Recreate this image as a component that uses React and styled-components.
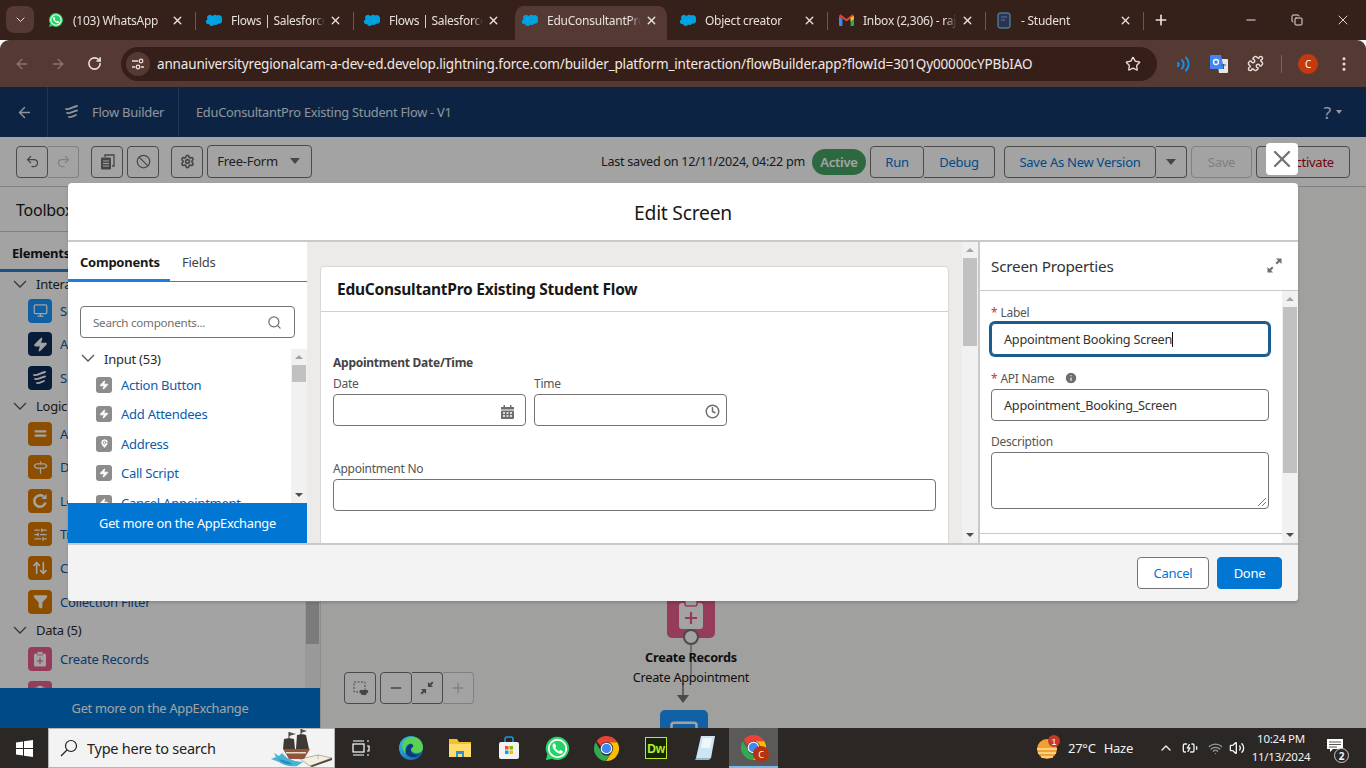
import React from "react";
import styled, { createGlobalStyle } from "styled-components";
import {
  ArrowLeft, ArrowRight, RotateCw, Star, Puzzle, EllipsisVertical, X, Plus, Minus,
  Undo2, Redo2, Copy, Ban, Settings, Search, ChevronUp, Clock,
  Info, Zap, MapPin, Equal, Signpost, ArrowUpDown, Filter, Monitor, SlidersHorizontal, Wifi, Volume2, BatteryCharging,
} from "lucide-react";

const UI = `"Noto Sans", "Open Sans", "Liberation Sans", sans-serif`;

const Global = createGlobalStyle`
  html, body { margin: 0; padding: 0; height: 100%; overflow: hidden; }
  body { font-family: ${UI}; font-size: 13px; color: #181818; letter-spacing: -0.25px; }
  * { box-sizing: border-box; }
`;

const Page = styled.div`
  width: 1366px;
  height: 768px;
  display: flex;
  flex-direction: column;
  overflow: hidden;
`;

/* browser chrome */
const TabStrip = styled.div`
  height: 40px;
  flex: none;
  background: #35201a;
  display: flex;
  align-items: flex-end;
  padding-left: 6px;
  color: #e8e0dd;
`;
const TabMenu = styled.div`
  width: 28px;
  height: 27px;
  margin: 0 4px 7px 0;
  border-radius: 8px;
  background: #543a33;
  display: flex;
  align-items: center;
  justify-content: center;
`;
const Tab = styled.div`
  width: 158px;
  height: 34px;
  flex: none;
  display: flex;
  align-items: center;
  padding: 0 9.5px 6px 7px;
  position: relative;
  border: solid transparent;
  border-width: 0 3px;
  border-radius: 11px 11px 0 0;
  background: ${p => (p.$active ? "#543a33" : "transparent")};
  background-clip: padding-box;
  &::after {
    content: "";
    display: ${p => (p.$sep ? "block" : "none")};
    position: absolute;
    right: -3px;
    top: 6px;
    height: 18px;
    width: 1px;
    background: #6b5650;
  }
`;
const TabIcon = styled.span`
  width: 16px;
  height: 16px;
  flex: none;
  display: flex;
  align-items: center;
  justify-content: center;
`;
const TabTitle = styled.span`
  flex: 1;
  margin: 0 4px 0 9px;
  font-size: 12px;
  white-space: nowrap;
  overflow: hidden;
  mask-image: linear-gradient(to right, #000 88%, transparent);
`;
const NewTab = styled.div`
  width: 34px;
  height: 34px;
  padding: 0 0 6px 0;
  display: flex;
  align-items: center;
  justify-content: center;
`;
const WindowButtons = styled.div`
  margin-left: auto;
  display: flex;
  height: 40px;
  align-items: center;
`;
const WindowButton = styled.div`
  width: 46px;
  display: flex;
  justify-content: center;
`;

const Omnibox = styled.div`
  height: 47px;
  flex: none;
  background: #543a33;
  border-radius: 9px 9px 0 0;
  display: flex;
  align-items: center;
  color: #e8e0dd;
`;
const NavButton = styled.div`
  width: 36px;
  display: flex;
  justify-content: center;
  color: ${p => (p.$off ? "#8a7670" : "#e8e0dd")};
  &:first-child { margin-left: 4px; }
`;
const UrlPill = styled.div`
  width: 1036px;
  height: 34px;
  margin-left: 9px;
  border-radius: 17px;
  background: #371f19;
  display: flex;
  align-items: center;
  padding: 0 16px 0 5px;
`;
const TuneChip = styled.div`
  width: 24px;
  height: 24px;
  border-radius: 50%;
  background: #543a33;
  display: flex;
  align-items: center;
  justify-content: center;
`;
const UrlText = styled.div`
  flex: 1;
  margin-left: 7px;
  font-size: 13.5px;
  white-space: nowrap;
  color: #f0e9e6;
  letter-spacing: -0.16px;
`;
const ExtIcons = styled.div`
  flex: 1;
  display: flex;
  align-items: center;
`;
const ExtSlot = styled.div`
  width: 36px;
  display: flex;
  justify-content: center;
  align-items: center;
  &:first-child { margin-left: 8px; }
`;
const ExtDivider = styled.div`
  width: 1px;
  height: 18px;
  background: #7a655f;
  margin: 0 8px;
`;
const Avatar = styled.div`
  width: 20px;
  height: 20px;
  border-radius: 50%;
  background: #c5390f;
  color: #fff;
  font-size: 10px;
  display: flex;
  align-items: center;
  justify-content: center;
`;

/* flow builder page */
const Viewport = styled.div`
  flex: 1;
  position: relative;
  display: flex;
  flex-direction: column;
  min-height: 0;
  background: #fafaf9;
`;
const AppHeader = styled.div`
  height: 50px;
  flex: none;
  background: #14386b;
  color: #fff;
  display: flex;
  align-items: center;
  font-size: 13px;
`;
const HeaderCell = styled.div`
  height: 100%;
  display: flex;
  align-items: center;
  gap: 12px;
  width: ${p => p.$w}px;
  padding-left: ${p => p.$pl || 0}px;
  border-right: ${p => (p.$line ? "1px solid #2c5590" : "0")};
  color: #dfe6ef;
  font-size: ${p => p.$fs || 13}px;
  white-space: nowrap;
`;
const HelpMark = styled.div`
  margin-left: auto;
  margin-right: 24px;
  font-size: 17px;
  display: flex;
  align-items: center;
  gap: 5px;
  color: #eef;
`;
const Caret = styled.span`
  width: 0;
  height: 0;
  border-left: ${p => p.$s || 3}px solid transparent;
  border-right: ${p => p.$s || 3}px solid transparent;
  border-top: ${p => (p.$s || 3) + 1}px solid ${p => p.$c || "currentColor"};
`;
const Toolbar = styled.div`
  height: 50px;
  flex: none;
  background: #fff;
  display: flex;
  align-items: center;
  padding: 0 16px;
  border-bottom: 1px solid #c9c9c9;
`;
const BtnGroup = styled.div`
  display: flex;
  height: 32px;
  margin-left: ${p => p.$ml || 0}px;
`;
const ToolBtn = styled.div`
  height: 100%;
  width: ${p => p.$w || 32}px;
  display: flex;
  align-items: center;
  justify-content: center;
  background: #fff;
  color: ${p => (p.$off ? "#c9c9c9" : p.$text || "#706e6b")};
  border: 1px solid ${p => (p.$off ? "#c9c9c9" : "#747474")};
  border-radius: 4px;
  font-size: 13px;
  & + & {
    border-left: 0;
    border-top-left-radius: 0;
    border-bottom-left-radius: 0;
  }
  &:has(+ &) {
    border-top-right-radius: 0;
    border-bottom-right-radius: 0;
  }
`;
const ModeBtn = styled(ToolBtn)`
  width: 105px;
  color: #333;
  gap: 12px;
  height: 33px;
  margin-top: -1px;
  padding-right: 2px;
`;
const SavedText = styled.div`
  margin-left: auto;
  font-size: 12.6px;
  color: #2b2b2b;
`;
const ActivePill = styled.div`
  margin: 0 4px 0 7px;
  width: 54px;
  height: 26px;
  border-radius: 13px;
  background: #45a566;
  color: #fff;
  font-size: 13px;
  font-weight: 600;
  display: flex;
  align-items: center;
  justify-content: center;
`;

const Workspace = styled.div`
  flex: 1;
  display: flex;
  min-height: 0;
`;
const Sidebar = styled.div`
  width: 321px;
  flex: none;
  display: flex;
  flex-direction: column;
  background: #fff;
  border-right: 1px solid #ddd;
`;
const SideTitle = styled.div`
  height: 45px;
  flex: none;
  padding: 12px 0 0 16px;
  font-size: 16px;
  border-bottom: 1px solid #c9c9c9;
`;
const SideTab = styled.div`
  height: 40px;
  flex: none;
  padding: 12px 0 0 12px;
  font-weight: 700;
  font-size: 13px;
  border-bottom: 3px solid #2c7fd0;
`;
const SideBody = styled.div`
  flex: 1;
  min-height: 0;
  display: flex;
  overflow: hidden;
`;
const ElementList = styled.div`
  flex: 1;
  padding-top: 2px;
`;
const GroupHead = styled.div`
  height: ${p => p.$h || 20}px;
  padding-bottom: ${p => p.$pb || 0}px;
  display: flex;
  align-items: center;
  gap: 9px;
  padding-left: 13px;
  font-size: 13px;
  color: #2b2b2b;
`;
const ElementRow = styled.div`
  height: 33.6px;
  display: flex;
  align-items: center;
  gap: 8px;
  padding-left: 28px;
  color: #0b5cab;
  font-size: 13px;
  white-space: nowrap;
`;
const ElementIcon = styled.div`
  width: 24px;
  height: 24px;
  border-radius: 4px;
  background: ${p => p.$bg};
  color: #fff;
  display: flex;
  align-items: center;
  justify-content: center;
  flex: none;
`;
const AppExchangeBar = styled.div`
  height: 40px;
  flex: none;
  background: #0176d3;
  color: #fff;
  display: flex;
  align-items: center;
  justify-content: center;
  font-size: 12.8px;
`;

const Canvas = styled.div`
  flex: 1;
  position: relative;
  background: #fafaf9;
  overflow: hidden;
`;
const CanvasTools = styled.div`
  position: absolute;
  left: 23px;
  top: 485px;
  display: flex;
  gap: 4px;
`;
const FlowNode = styled.div`
  position: absolute;
  left: ${p => p.$x}px;
  top: ${p => p.$y}px;
  width: 48px;
  height: 48px;
  border-radius: 5px;
  background: ${p => p.$bg};
  color: #fff;
  display: flex;
  align-items: center;
  justify-content: center;
`;
const NodePort = styled.div`
  position: absolute;
  left: 362px;
  top: 442px;
  width: 16px;
  height: 16px;
  border-radius: 50%;
  background: #fff;
  border: 2px solid #747474;
`;
const NodeCaption = styled.div`
  position: absolute;
  left: 290px;
  top: ${p => p.$y}px;
  width: 160px;
  text-align: center;
  font-size: 12.7px;
  font-weight: ${p => (p.$bold ? 700 : 400)};
  color: #181818;
`;
const Connector = styled.svg`
  position: absolute;
  left: 352px;
  top: 450px;
`;

const Scrollbar = styled.div`
  width: ${p => p.$w || 14}px;
  flex: none;
  background: ${p => p.$bg || "#f1f1f1"};
  display: flex;
  flex-direction: column;
  align-items: stretch;
`;
const ScrollArrow = styled.div`
  height: 16px;
  flex: none;
  display: flex;
  align-items: center;
  justify-content: center;
  &::before {
    content: "";
    border-left: 4px solid transparent;
    border-right: 4px solid transparent;
    ${p => (p.$up ? "border-bottom: 4px solid #a3a3a3;" : "border-top: 4px solid #505050;")}
  }
`;
const ScrollThumb = styled.div`
  height: ${p => p.$h}px;
  flex: none;
  margin: 0 1px;
  background: ${p => p.$c || "#c1c1c1"};
`;
const ScrollGap = styled.div`
  flex: ${p => (p.$h ? "none" : "1")};
  height: ${p => (p.$h ? `${p.$h}px` : "auto")};
`;

/* modal */
const Backdrop = styled.div`
  position: absolute;
  inset: 0;
  background: rgba(0, 0, 0, 0.36);
`;
const CloseBtn = styled.div`
  position: absolute;
  left: 1266px;
  top: 56px;
  width: 32px;
  height: 32px;
  background: #fff;
  border-radius: 4px;
  color: #747474;
  display: flex;
  align-items: center;
  justify-content: center;
`;
const Modal = styled.div`
  position: absolute;
  left: 68px;
  top: 96px;
  width: 1230px;
  height: 418px;
  border-radius: 4px;
  background: #fff;
  display: flex;
  flex-direction: column;
  overflow: hidden;
  box-shadow: 0 2px 3px rgba(0, 0, 0, 0.16);
`;
const ModalTitle = styled.div`
  height: 59px;
  flex: none;
  font-size: 19.3px;
  color: #181818;
  text-align: center;
  padding-top: 16px;
  border-bottom: 2px solid #c9c9c9;
`;
const ModalBody = styled.div`
  height: 301px;
  flex: none;
  display: flex;
`;
const ModalFooter = styled.div`
  flex: 1;
  background: #f3f3f3;
  border-top: 2px solid #c9c9c9;
  display: flex;
  align-items: center;
  justify-content: flex-end;
  gap: 8px;
  padding: 0 16px 0 0;
`;
const FooterBtn = styled.div`
  height: 32px;
  width: ${p => p.$w}px;
  border-radius: 4px;
  display: flex;
  align-items: center;
  justify-content: center;
  font-size: 13px;
  background: ${p => (p.$brand ? "#0176d3" : "#fff")};
  color: ${p => (p.$brand ? "#fff" : "#0176d3")};
  border: 1px solid ${p => (p.$brand ? "#0176d3" : "#747474")};
`;

const Palette = styled.div`
  width: 239px;
  flex: none;
  display: flex;
  flex-direction: column;
  min-height: 0;
`;
const PaletteTabs = styled.div`
  height: 40px;
  flex: none;
  display: flex;
  border-bottom: 1px solid #747474;
`;
const PaletteTab = styled.div`
  height: 40px;
  width: ${p => p.$w}px;
  padding: 11px 0 0 ${p => p.$pl}px;
  font-size: 13px;
  font-weight: ${p => (p.$on ? 700 : 400)};
  color: ${p => (p.$on ? "#181818" : "#444")};
  border-bottom: ${p => (p.$on ? "3px solid #1b7fe0" : "0")};
`;
const SearchBox = styled.div`
  flex: none;
  margin: 24px 12px 0;
  height: 32px;
  border: 1px solid #747474;
  border-radius: 4px;
  display: flex;
  align-items: center;
  justify-content: space-between;
  padding: 0 12px;
  font-size: 11.6px;
  color: #706e6b;
`;
const PaletteScroll = styled.div`
  flex: 1;
  min-height: 0;
  margin-top: 11px;
  display: flex;
  overflow: hidden;
`;
const Tree = styled.div`
  flex: 1;
  overflow: hidden;
`;
const TreeRow = styled.div`
  height: 29.5px;
  display: flex;
  align-items: center;
  gap: 9px;
  padding-left: 28px;
  color: #0b5cab;
  font-size: 13px;
  white-space: nowrap;
`;
const TreeIcon = styled.div`
  width: 16px;
  height: 16px;
  border-radius: 3px;
  background: #8c8c8c;
  color: #fff;
  display: flex;
  align-items: center;
  justify-content: center;
  flex: none;
`;
const Stage = styled.div`
  flex: 1;
  min-width: 0;
  display: flex;
  background: #ecebea;
`;
const StageInner = styled.div`
  flex: 1;
  min-width: 0;
  padding: 24px 13px 0 13px;
  overflow: hidden;
`;
const ScreenCard = styled.div`
  background: #fff;
  border: 1px solid #d8d8d8;
  border-radius: 4px 4px 0 0;
  height: 320px;
`;
const CardHead = styled.div`
  height: 45px;
  border-bottom: 1px solid #d0d0d0;
  padding: 11px 0 0 16px;
  font-size: 15.5px;
  font-weight: 700;
  color: #181818;
`;
const CardBody = styled.div`
  padding: 42px 12px 0;
`;
const SectionName = styled.div`
  font-size: 12px;
  font-weight: 700;
  color: #444;
  height: 18px;
`;
const FieldRow = styled.div`
  display: flex;
  gap: 8px;
  margin-bottom: ${p => p.$mb || 0}px;
`;
const FieldCol = styled.div`
  width: ${p => p.$w}px;
`;
const FieldLabel = styled.div`
  font-size: 12px;
  color: #555;
  height: ${p => p.$h || 17}px;
  padding-top: ${p => p.$pt || 0}px;
  padding-bottom: ${p => p.$pb || 0}px;
  display: flex;
  align-items: center;
  gap: 3px;
`;
const Req = styled.span`
  color: #c23934;
`;
const InfoSlot = styled.span`
  display: flex;
  margin-left: 7px;
`;
const TextBox = styled.div`
  height: ${p => p.$h || 32}px;
  border: 1px solid ${p => (p.$focus ? "#1b5c8e" : "#747474")};
  box-shadow: ${p => (p.$focus ? "0 0 0 2px #1b5c8e" : "none")};
  border-radius: 4px;
  display: flex;
  align-items: center;
  justify-content: space-between;
  padding: ${p => p.$ptop || 0}px ${p => p.$pr || 12}px 0 12px;
  color: #333;
  font-size: 12.7px;
  position: relative;
  background: #fff;
`;
const TextCaret = styled.span`
  display: inline-block;
  width: 1px;
  height: 15px;
  background: #111;
  vertical-align: -3px;
`;
const Grip = styled.svg`
  position: absolute;
  right: 1px;
  bottom: 1px;
`;
const Props = styled.div`
  width: 320px;
  flex: none;
  display: flex;
  flex-direction: column;
  min-height: 0;
  border-left: 2px solid #c9c9c9;
`;
const PropsHead = styled.div`
  height: 49px;
  flex: none;
  display: flex;
  align-items: center;
  justify-content: space-between;
  padding: 0 16px 1px 11px;
  font-size: 15.3px;
  color: #333;
  border-bottom: 1px solid #c9c9c9;
`;
const PropsScroll = styled.div`
  flex: 1;
  min-height: 0;
  display: flex;
`;
const PropsForm = styled.div`
  flex: 1;
  display: flex;
  flex-direction: column;
  padding: 13px 13px 0 11px;
`;
const PropsRule = styled.div`
  margin: 24px -13px 0 -11px;
  border-top: 1px solid #c9c9c9;
`;

/* taskbar */
const Taskbar = styled.div`
  height: 40px;
  flex: none;
  background: #2b2725;
  display: flex;
  align-items: center;
  color: #fff;
`;
const StartBtn = styled.div`
  width: 48px;
  height: 40px;
  display: flex;
  align-items: center;
  justify-content: center;
`;
const SearchField = styled.div`
  width: 287px;
  height: 40px;
  background: #f3f3f3;
  border: 1px solid #b5b5b5;
  display: flex;
  align-items: center;
  color: #222;
  font-size: 14.5px;
  padding-left: 11px;
  gap: 9px;
`;
const SearchLabel = styled.span`
  flex: 1;
`;
const TaskIcon = styled.div`
  width: ${p => p.$w || 49}px;
  height: 40px;
  flex: none;
  display: flex;
  align-items: center;
  justify-content: center;
  background: ${p => (p.$on ? "#5c5a58" : "transparent")};
  border-bottom: ${p => (p.$on ? "2px solid #76b9ed" : "0")};
  position: relative;
`;
const Tray = styled.div`
  margin-left: auto;
  margin-right: 10px;
  display: flex;
  align-items: center;
  height: 40px;
  font-size: 13px;
  color: #f2f2f2;
`;
const ClockText = styled.div`
  width: 62px;
  margin: 0 2px 0 5px;
  text-align: center;
  font-size: 11.5px;
  line-height: 18px;
`;
const TrayNotif = styled.div`
  width: 42px;
  height: 40px;
  display: flex;
  justify-content: center;
  padding-top: 11px;
  position: relative;
`;
const NotifCount = styled.div`
  position: absolute;
  left: 20px;
  top: 20px;
  width: 15px;
  height: 15px;
  border-radius: 50%;
  border: 1px solid #ccc;
  background: #2b2725;
  font-size: 10px;
  font-weight: 700;
  display: flex;
  align-items: center;
  justify-content: center;
`;
const TrayGap = styled.span`
  width: ${p => p.$w}px;
`;
const ChromeBadge = styled.div`
  position: absolute;
  left: 24px;
  top: 18px;
  width: 16px;
  height: 16px;
  border-radius: 50%;
  background: #b6330f;
  font-size: 9px;
  display: flex;
  align-items: center;
  justify-content: center;
`;

/* drawings */
const Cloud = () => (
  <svg width="16" height="12" viewBox="0 0 16 12">
    <path fill="#00a1e0" d="M6.6 2.2A2.8 2.8 0 0 1 11.2 1.6 3.2 3.2 0 0 1 15.8 5.6 3 3 0 0 1 12 9.6 2.4 2.4 0 0 1 8.2 10.4 2.8 2.8 0 0 1 3 10 2.4 2.4 0 0 1 1.6 5.4 2.8 2.8 0 0 1 6.6 2.2Z" />
  </svg>
);
const WhatsApp = ({ size = 16 }) => (
  <svg width={size} height={size} viewBox="0 0 24 24">
    <path fill="#25d366" d="M12 1.5A10.4 10.4 0 0 0 3 17.2L1.6 22.5l5.4-1.4A10.4 10.4 0 1 0 12 1.5Z" />
    <circle cx="12" cy="12" r="7.8" fill="none" stroke="#fff" strokeWidth="1.6" />
    <path fill="#fff" d="M9 7.3c-.5 0-1.5 1-1.4 2.4.1 2.8 4 6.8 7 6.9 1.4 0 2.3-1 2.3-1.7 0-.4-2-1.6-2.5-1.5-.4.1-.8 1-1.1 1-.9-.1-3-2-3.3-3 0-.4.8-.8.8-1.2 0-.4-1-2.9-1.8-2.9Z" />
  </svg>
);
const Gmail = () => (
  <svg width="15" height="12" viewBox="0 0 15 12">
    <path fill="#4285f4" d="M0 2v9a1 1 0 0 0 1 1h2.4V5Z" />
    <path fill="#34a853" d="M15 2v9a1 1 0 0 1-1 1h-2.4V5Z" />
    <path fill="#ea4335" d="M0 2 7.5 7.6 15 2 13.6.3 7.5 4.9 1.4.3Z" />
    <path fill="#fbbc04" d="M11.6 3.3 15 2v3l-3.4 2.5Z" />
  </svg>
);
const StudentTab = () => (
  <svg width="16" height="17" viewBox="0 0 16 17">
    <rect x="2" y="1" width="12" height="15" rx="2" fill="#2a3350" stroke="#54a0b8" />
    <path d="M5 5h6M5 8h4" stroke="#6772a8" />
  </svg>
);
const Chevron = ({ size = 14, c = "#555" }) => (
  <svg width={size} height={size * 0.6} viewBox="0 0 14 8.400" fill="none" stroke={c} strokeWidth="1.300">
    <path d="M1 1l6 6 6-6" />
  </svg>
);
const FlowMark = ({ c = "#dfe6ef", size = 16 }) => (
  <svg width={size} height={size} viewBox="0 0 16 16" fill="none" stroke={c} strokeWidth="1.800" strokeLinecap="round">
    <path d="M2 5c3 1 6-2 11-3M3 9c3 1 5-1.500 10-2.500M5 13c2 .6 4-1 7-2" />
  </svg>
);
const Tune = () => (
  <svg width="14" height="14" viewBox="0 0 14 14" fill="none" stroke="#e8e0dd" strokeWidth="1.300">
    <path d="M1 4h6M1 10h3M10 10h3" />
    <circle cx="10" cy="4" r="1.800" />
    <circle cx="7" cy="10" r="1.800" />
  </svg>
);
const Waves = () => (
  <svg width="14" height="16" viewBox="0 0 14 16" fill="none" stroke="#1e8de6" strokeWidth="2" strokeLinecap="round">
    <path d="M2 7c1 1 1 2 0 3M6 4c2 2.500 2 6 0 8.500M10 1.500c3.500 4 3.500 9 0 13" />
  </svg>
);
const Translate = () => (
  <svg width="18" height="18" viewBox="0 0 18 18">
    <path fill="#e6e6e6" d="M7 4h10a1 1 0 0 1 1 1v12a1 1 0 0 1-1 1H9Z" />
    <path fill="#4285f4" d="M1 0h10l3 14H1a1 1 0 0 1-1-1V1a1 1 0 0 1 1-1Z" />
    <circle cx="6" cy="7" r="2.500" fill="none" stroke="#fff" strokeWidth="1.300" />
    <path d="M11 10h5M13.500 9v5" stroke="#555" />
  </svg>
);
const PagesIcon = () => (
  <svg width="15" height="16" viewBox="0 0 15 16">
    <path fill="none" stroke="#706e6b" strokeWidth="1.300" d="M5 3V1h9v11h-2" />
    <rect x="1" y="3.500" width="10" height="12" rx="1" fill="#706e6b" />
    <path d="M3 7h6M3 9.500h6M3 12h6" stroke="#fff" />
  </svg>
);
const CalendarIcon = () => (
  <svg width="13" height="14" viewBox="0 0 13 14" fill="#706e6b">
    <rect x="2.500" y="0" width="1.500" height="3" />
    <rect x="9" y="0" width="1.500" height="3" />
    <rect x="0" y="2" width="13" height="2.500" />
    <rect x="0" y="5.500" width="13" height="8.500" rx="1" />
    <path d="M2 8h2M5.500 8h2M9 8h2M2 11h2M5.500 11h2M9 11h2" stroke="#fff" strokeWidth="1.500" />
  </svg>
);
const ExpandArrows = ({ inward, size = 15 }) => (
  <svg width={size} height={size} viewBox="0 0 15 15" fill="#706e6b">
    {inward ? (
      <>
        <path d="M8.500 6.500V1l2 2L13 .5 14.500 2 12 4.500l2 2Z" />
        <path d="M6.500 8.500V14l-2-2L2 14.500.5 13 3 10.500l-2-2Z" />
      </>
    ) : (
      <>
        <path d="M14.500.5V6l-2-2L10 6.500 8.500 5 11 2.500l-2-2Z" />
        <path d="M.5 14.500V9l2 2L5 8.500 6.500 10 4 12.500l2 2Z" />
      </>
    )}
  </svg>
);
const ClipboardFill = ({ size = 16, hole = "#ea5e8e" }) => (
  <svg width={size} height={size} viewBox="0 0 16 16">
    <rect x="2" y="2.500" width="12" height="13" rx="1.500" fill="#fff" />
    <rect x="5" y="0.500" width="6" height="3.500" rx="1" fill="#fff" stroke={hole} strokeWidth="0.800" />
    <path d="M8 7v6M5 10h6" stroke={hole} strokeWidth="1.100" />
  </svg>
);
const LoopIcon = () => (
  <svg width="16" height="16" viewBox="0 0 16 16" fill="none" stroke="#fff" strokeWidth="2.600">
    <path d="M13.500 9.500A5.700 5.700 0 1 1 11.500 3.500" />
    <path d="M14.500 1v5h-5Z" fill="#fff" strokeWidth="0" />
  </svg>
);
const WinLogo = () => (
  <svg width="17" height="17" viewBox="0 0 17 17" fill="#fff">
    <path d="M0 2.400 7 1.400V8H0ZM8 1.300 17 0V8H8ZM0 9h7v6.600L0 14.600ZM8 9h9v8l-9-1.300Z" />
  </svg>
);
const SearchGlass = () => (
  <svg width="18" height="18" viewBox="0 0 18 18" fill="none" stroke="#222" strokeWidth="1.200">
    <circle cx="11" cy="7" r="5.500" />
    <path d="M7 11 1 17" />
  </svg>
);
const Ship = () => (
  <svg width="64" height="38" viewBox="0 0 64 38">
    <path fill="#f5efe0" stroke="#8a8578" strokeWidth=".6" d="M30 30 48 26l14 3-22 8Z" />
    <path fill="#4b463c" d="M40 37 62 29v2L42 38Z" />
    <path d="M48 26v4" stroke="#999" strokeWidth=".6" />
    <path fill="#93533a" d="M13 20h27l-6 10H19Z" />
    <path fill="#e6ddc8" d="M16 23h20v1.500H16Z" />
    <path fill="#3d3a34" d="M14 10c3-1 7-1 10 0l1 10H13ZM27 6c3-1 7-1 9 0l3 14H26Z" />
    <path fill="#57524a" d="M19 3l7 2-7 2ZM31 0l6 2-6 2Z" />
    <path d="M19 3v8M31 0v7" stroke="#333" />
    <path fill="#49b3d6" d="M1 30l5-2-2-4 5 3 3-3 5 5 8 3 8 1-6 4c-8 1-14-1-18-4-3-1-5-2-8-3Z" />
    <path fill="#2c8fb5" d="M8 30c5 1 11 2 14 5-5 1-10-1-14-5Z" />
  </svg>
);
const TaskView = () => (
  <svg width="18" height="16" viewBox="0 0 18 16" fill="none" stroke="#fff" strokeWidth="1.200">
    <rect x="1" y="4" width="11" height="8" />
    <path d="M1 1h11M1 15h11M15 1h2M15 6h2v5h-2M15 15h2" />
  </svg>
);
const Edge = () => (
  <svg width="26" height="26" viewBox="0 0 26 26">
    <defs>
      <linearGradient id="edgeA" x1="0" y1="0" x2="1" y2="1">
        <stop offset="0" stopColor="#35c1f1" />
        <stop offset="1" stopColor="#0c59a4" />
      </linearGradient>
    </defs>
    <circle cx="13" cy="13" r="12" fill="url(#edgeA)" />
    <path fill="#5bd24f" d="M25 13c0 3-3 5-6 5-4 0-6-2-6-4 0-1 1-2 2-2s-1-4-4-3-5 5-3 10c-4-4-5-9-2-13 4-5 12-5 16-1 2 2 3 5 3 8Z" />
    <path fill="#0b3c78" d="M8 19c-1-5 1-9 4-10 2-.6 4 1 3 3-3 1-3 5 1 7 3 1 5 1 7-1-3 5-11 6-15 1Z" />
  </svg>
);
const Explorer = () => (
  <svg width="24" height="22" viewBox="0 0 24 22">
    <path fill="#f3c12c" d="M1 2h8l2 3h12v15H1Z" />
    <path fill="#ffdc6b" d="M1 7h22v13H1Z" />
    <path fill="#2d8fd5" d="M8 14h8v6h-2v-3h-4v3H8Z" />
  </svg>
);
const Store = () => (
  <svg width="22" height="24" viewBox="0 0 22 24">
    <path d="M7 6V3a2 2 0 0 1 2-2h4a2 2 0 0 1 2 2v3" fill="none" stroke="#1d9bd8" strokeWidth="1.500" />
    <rect x="1" y="6" width="20" height="17" rx="2" fill="#f2f2f2" />
    <rect x="7" y="10" width="3.500" height="3.500" fill="#f25022" />
    <rect x="11.500" y="10" width="3.500" height="3.500" fill="#7fba00" />
    <rect x="7" y="14.500" width="3.500" height="3.500" fill="#00a4ef" />
    <rect x="11.500" y="14.500" width="3.500" height="3.500" fill="#ffb900" />
  </svg>
);
const Chrome = ({ size = 25 }) => (
  <svg width={size} height={size} viewBox="0 0 24 24">
    <path fill="#ea4335" d="M12 0a12 12 0 0 1 10.400 6H12a6 6 0 0 0-5.600 3.800L2.500 4.700A12 12 0 0 1 12 0Z" />
    <path fill="#34a853" d="M1.600 6A12 12 0 0 0 11 24l4.800-6.300A6 6 0 0 1 6.400 14Z" />
    <path fill="#fbbc04" d="M22.400 6H14a6 6 0 0 1 3.400 9L11.500 24A12 12 0 0 0 22.400 6Z" />
    <circle cx="12" cy="12" r="5.600" fill="#fff" />
    <circle cx="12" cy="12" r="4.500" fill="#4285f4" />
  </svg>
);
const Dreamweaver = () => (
  <svg width="22" height="22" viewBox="0 0 22 22">
    <rect x="0.500" y="0.500" width="21" height="21" fill="#16240a" stroke="#b7ee27" />
    <text x="11" y="15.500" textAnchor="middle" fontSize="12" fontWeight="700" fontFamily="Liberation Sans" fill="#b7ee27">Dw</text>
  </svg>
);
const Notes = () => (
  <svg width="22" height="26" viewBox="0 0 22 26">
    <path fill="#cfe4f2" d="M7 1h14l-4 22H2Z" />
    <path fill="#8fb8d2" d="M2 23h15l-2 2H1Z" />
    <path fill="#eef6fb" d="M9 3h9l-2 10H7Z" />
  </svg>
);
const Weather = () => (
  <svg width="24" height="26" viewBox="0 0 24 26">
    <circle cx="11" cy="14" r="10" fill="#f0a030" />
    <path d="M1 14h20M2 18h18M5 22h12" stroke="#ffe0a0" strokeWidth="1.500" />
    <circle cx="18" cy="6" r="6" fill="#c9362a" />
    <text x="18" y="9.500" textAnchor="middle" fontSize="9" fontFamily="Liberation Sans" fill="#fff">1</text>
  </svg>
);
const MarqueeHand = () => (
  <svg width="18" height="18" viewBox="0 0 18 18" fill="none" stroke="#706e6b">
    <rect x="3" y="3" width="11" height="10" strokeDasharray="2 1.500" />
    <path fill="#706e6b" stroke="none" d="M9 11h6.500a1.500 1.500 0 0 1 .5 3l-1 2h-4l-2.500-3Z" />
  </svg>
);
const NoteStack = () => (
  <svg width="16" height="14" viewBox="0 0 16 14">
    <path fill="#fff" d="M0 0h16v10H6l-3 3v-3H0Z" />
    <path d="M2 3h12M2 5.500h12M2 8h8" stroke="#2b2725" strokeWidth=".8" />
  </svg>
);

const browserTabs = [
  { id: 1, title: "(103) WhatsApp", icon: <WhatsApp />, sep: true },
  { id: 2, title: "Flows | Salesforce", icon: <Cloud />, sep: true },
  { id: 3, title: "Flows | Salesforce", icon: <Cloud /> },
  { id: 4, title: "EduConsultantPro", icon: <Cloud />, active: true },
  { id: 5, title: "Object creator", icon: <Cloud />, sep: true },
  { id: 6, title: "Inbox (2,306) - rajan", icon: <Gmail />, sep: true },
  { id: 7, title: "- Student", icon: <StudentTab />, sep: true },
];

const interaction = [
  { label: "Screen", bg: "#1b96ff", icon: <Monitor size={15} /> },
  { label: "Action", bg: "#0d2d5c", icon: <Zap size={15} fill="#fff" /> },
  { label: "Subflow", bg: "#0d2d5c", icon: <FlowMark c="#fff" /> },
];
const logic = [
  { label: "Assignment", bg: "#dd7a01", icon: <Equal size={17} strokeWidth={3} /> },
  { label: "Decision", bg: "#dd7a01", icon: <Signpost size={15} /> },
  { label: "Loop", bg: "#dd7a01", icon: <LoopIcon /> },
  { label: "Transform", bg: "#dd7a01", icon: <SlidersHorizontal size={15} /> },
  { label: "Collection Sort", bg: "#dd7a01", icon: <ArrowUpDown size={16} strokeWidth={2.5} /> },
  { label: "Collection Filter", bg: "#dd7a01", icon: <Filter size={15} fill="#fff" /> },
];
const dataItems = [
  { label: "Create Records", bg: "#ea5e8e", icon: <ClipboardFill /> },
  { label: "Update Records", bg: "#ea5e8e", icon: <ClipboardFill /> },
];
const paletteItems = [
  { label: "Action Button", icon: <Zap size={10} fill="#fff" /> },
  { label: "Add Attendees", icon: <Zap size={10} fill="#fff" /> },
  { label: "Address", icon: <MapPin size={11} fill="#fff" stroke="#8c8c8c" /> },
  { label: "Call Script", icon: <Zap size={10} fill="#fff" /> },
  { label: "Cancel Appointment", icon: <Zap size={10} fill="#fff" /> },
];

function ElementGroup({ title, items, height }) {
  return (
    <>
      <GroupHead $h={height}>
        <Chevron />
        {title}
      </GroupHead>
      {items.map(item => (
        <ElementRow key={item.label}>
          <ElementIcon $bg={item.bg}>{item.icon}</ElementIcon>
          {item.label}
        </ElementRow>
      ))}
    </>
  );
}

function App() {
  return (
    <Page>
      <Global />
      <TabStrip>
        <TabMenu>
          <Chevron size={9} c="#fff" />
        </TabMenu>
        {browserTabs.map(tab => (
          <Tab key={tab.id} $active={tab.active} $sep={tab.sep}>
            <TabIcon>{tab.icon}</TabIcon>
            <TabTitle>{tab.title}</TabTitle>
            <X size={13} strokeWidth={2.5} />
          </Tab>
        ))}
        <NewTab>
          <Plus size={16} strokeWidth={2.5} />
        </NewTab>
        <WindowButtons>
          <WindowButton><Minus size={14} /></WindowButton>
          <WindowButton><Copy size={12} /></WindowButton>
          <WindowButton><X size={16} strokeWidth={1.4} /></WindowButton>
        </WindowButtons>
      </TabStrip>
      <Omnibox>
        <NavButton $off><ArrowLeft size={16} /></NavButton>
        <NavButton $off><ArrowRight size={16} /></NavButton>
        <NavButton><RotateCw size={15} strokeWidth={2.5} /></NavButton>
        <UrlPill>
          <TuneChip><Tune /></TuneChip>
          <UrlText>annauniversityregionalcam-a-dev-ed.develop.lightning.force.com/builder_platform_interaction/flowBuilder.app?flowId=301Qy00000cYPBbIAO</UrlText>
          <Star size={16} />
        </UrlPill>
        <ExtIcons>
          <ExtSlot><Waves /></ExtSlot>
          <ExtSlot><Translate /></ExtSlot>
          <ExtSlot><Puzzle size={17} /></ExtSlot>
          <ExtDivider />
          <ExtSlot><Avatar>C</Avatar></ExtSlot>
          <ExtSlot><EllipsisVertical size={18} /></ExtSlot>
        </ExtIcons>
      </Omnibox>

      <Viewport>
        <AppHeader>
          <HeaderCell $w={48} $pl={16} $line><ArrowLeft size={17} /></HeaderCell>
          <HeaderCell $w={131} $pl={16} $line><FlowMark />Flow Builder</HeaderCell>
          <HeaderCell $w={300} $pl={17} $fs={12.8}>EduConsultantPro Existing Student Flow - V1</HeaderCell>
          <HelpMark>?<Caret /></HelpMark>
        </AppHeader>
        <Toolbar>
          <BtnGroup>
            <ToolBtn><Undo2 size={15} /></ToolBtn>
            <ToolBtn $w={31} $off><Redo2 size={15} /></ToolBtn>
          </BtnGroup>
          <BtnGroup $ml={12}><ToolBtn><PagesIcon /></ToolBtn></BtnGroup>
          <BtnGroup $ml={4}><ToolBtn><Ban size={15} /></ToolBtn></BtnGroup>
          <BtnGroup $ml={12}><ToolBtn><Settings size={15} strokeWidth={2.6} /></ToolBtn></BtnGroup>
          <BtnGroup $ml={4}>
            <ModeBtn>Free-Form<Caret $s={5} $c="#706e6b" /></ModeBtn>
          </BtnGroup>
          <SavedText>Last saved on 12/11/2024, 04:22 pm</SavedText>
          <ActivePill>Active</ActivePill>
          <BtnGroup>
            <ToolBtn $w={54} $text="#0176d3">Run</ToolBtn>
            <ToolBtn $w={71} $text="#0176d3">Debug</ToolBtn>
          </BtnGroup>
          <BtnGroup $ml={9}>
            <ToolBtn $w={152} $text="#0176d3">Save As New Version</ToolBtn>
            <ToolBtn $w={31}><Caret $s={5} $c="#706e6b" /></ToolBtn>
          </BtnGroup>
          <BtnGroup $ml={4}><ToolBtn $w={61} $off>Save</ToolBtn></BtnGroup>
          <BtnGroup $ml={4}><ToolBtn $w={94} $text="#ba0517">Deactivate</ToolBtn></BtnGroup>
        </Toolbar>
        <Workspace>
          <Sidebar>
            <SideTitle>Toolbox</SideTitle>
            <SideTab>Elements</SideTab>
            <SideBody>
              <ElementList>
                <ElementGroup title="Interaction" items={interaction} />
                <ElementGroup title="Logic" items={logic} height={22} />
                <ElementGroup title="Data (5)" items={dataItems} height={24} />
              </ElementList>
              <Scrollbar $bg="#f0f0f0" $w={15}>
                <ScrollGap $h={330} />
                <ScrollThumb $h={42} />
                <ScrollGap />
              </Scrollbar>
            </SideBody>
            <AppExchangeBar>Get more on the AppExchange</AppExchangeBar>
          </Sidebar>
          <Canvas>
            <FlowNode $x={346} $y={403} $bg="#ea5e8e"><ClipboardFill size={32} /></FlowNode>
            <Connector width="20" height="70" viewBox="0 0 20 70" fill="none">
              <path d="M18 0v38" stroke="#9a9a9a" strokeWidth="1.500" />
              <path d="M10 46v16" stroke="#747474" strokeWidth="1.500" />
              <path d="M4 58h12l-6 8Z" fill="#747474" />
            </Connector>
            <NodePort />
            <NodeCaption $y={461} $bold>Create Records</NodeCaption>
            <NodeCaption $y={481}>Create Appointment</NodeCaption>
            <FlowNode $x={339} $y={523} $bg="#1b96ff"><Monitor size={30} /></FlowNode>
            <CanvasTools>
              <BtnGroup><ToolBtn><MarqueeHand /></ToolBtn></BtnGroup>
              <BtnGroup>
                <ToolBtn><Minus size={16} /></ToolBtn>
                <ToolBtn $w={31}><ExpandArrows inward size={14} /></ToolBtn>
                <ToolBtn $w={31} $off><Plus size={16} /></ToolBtn>
              </BtnGroup>
            </CanvasTools>
          </Canvas>
        </Workspace>

        <Backdrop />
        <CloseBtn><X size={28} strokeWidth={2} /></CloseBtn>
        <Modal>
          <ModalTitle>Edit Screen</ModalTitle>
          <ModalBody>
            <Palette>
              <PaletteTabs>
                <PaletteTab $on $w={102} $pl={12}>Components</PaletteTab>
                <PaletteTab $w={80} $pl={12}>Fields</PaletteTab>
              </PaletteTabs>
              <SearchBox>
                Search components...
                <Search size={15} color="#706e6b" />
              </SearchBox>
              <PaletteScroll>
                <Tree>
                  <GroupHead $h={21} $pb={2}>
                    <Chevron />
                    Input (53)
                  </GroupHead>
                  {paletteItems.map(item => (
                    <TreeRow key={item.label}>
                      <TreeIcon>{item.icon}</TreeIcon>
                      {item.label}
                    </TreeRow>
                  ))}
                </Tree>
                <Scrollbar $w={16}>
                  <ScrollArrow $up />
                  <ScrollThumb $h={17} />
                  <ScrollGap />
                  <ScrollArrow />
                </Scrollbar>
              </PaletteScroll>
              <AppExchangeBar>Get more on the AppExchange</AppExchangeBar>
            </Palette>
            <Stage>
              <StageInner>
                <ScreenCard>
                  <CardHead>EduConsultantPro Existing Student Flow</CardHead>
                  <CardBody>
                    <SectionName>Appointment Date/Time</SectionName>
                    <FieldRow $mb={32}>
                      <FieldCol $w={193}>
                        <FieldLabel $h={22}>Date</FieldLabel>
                        <TextBox $pr={11} $ptop={3}><span /><CalendarIcon /></TextBox>
                      </FieldCol>
                      <FieldCol $w={193}>
                        <FieldLabel $h={22}>Time</FieldLabel>
                        <TextBox $pr={6} $ptop={3}><span /><Clock size={15} color="#706e6b" strokeWidth={2.4} /></TextBox>
                      </FieldCol>
                    </FieldRow>
                    <FieldLabel $h={21}>Appointment No</FieldLabel>
                    <TextBox />
                  </CardBody>
                </ScreenCard>
              </StageInner>
              <Scrollbar $w={16}>
                <ScrollArrow $up />
                <ScrollThumb $h={88} />
                <ScrollGap />
                <ScrollArrow />
              </Scrollbar>
            </Stage>
            <Props>
              <PropsHead>
                Screen Properties
                <ExpandArrows />
              </PropsHead>
              <PropsScroll>
                <PropsForm>
                  <FieldLabel $h={19} $pb={2}><Req>*</Req>Label</FieldLabel>
                  <TextBox $focus>
                    <span>Appointment Booking Screen<TextCaret /></span>
                  </TextBox>
                  <FieldLabel $h={34} $pt={12}>
                    <Req>*</Req>API Name
                    <InfoSlot><Info size={14} fill="#706e6b" color="#fff" /></InfoSlot>
                  </FieldLabel>
                  <TextBox>Appointment_Booking_Screen</TextBox>
                  <FieldLabel $h={31} $pt={9}>Description</FieldLabel>
                  <TextBox $h={57}>
                    <Grip width="10" height="10" viewBox="0 0 10 10" stroke="#777">
                      <path d="M1 9 9 1M5 9l4-4" />
                    </Grip>
                  </TextBox>
                  <PropsRule />
                </PropsForm>
                <Scrollbar $w={16}>
                  <ScrollArrow $up />
                  <ScrollThumb $h={166} />
                  <ScrollGap />
                  <ScrollArrow />
                </Scrollbar>
              </PropsScroll>
            </Props>
          </ModalBody>
          <ModalFooter>
            <FooterBtn $w={72}>Cancel</FooterBtn>
            <FooterBtn $w={65} $brand>Done</FooterBtn>
          </ModalFooter>
        </Modal>
      </Viewport>

      <Taskbar>
        <StartBtn><WinLogo /></StartBtn>
        <SearchField>
          <SearchGlass />
          <SearchLabel>Type here to search</SearchLabel>
          <Ship />
        </SearchField>
        <TaskIcon $w={51}><TaskView /></TaskIcon>
        <TaskIcon><Edge /></TaskIcon>
        <TaskIcon><Explorer /></TaskIcon>
        <TaskIcon><Store /></TaskIcon>
        <TaskIcon><WhatsApp size={27} /></TaskIcon>
        <TaskIcon><Chrome /></TaskIcon>
        <TaskIcon><Dreamweaver /></TaskIcon>
        <TaskIcon><Notes /></TaskIcon>
        <TaskIcon $on>
          <Chrome />
          <ChromeBadge>C</ChromeBadge>
        </TaskIcon>
        <Tray>
          <Weather />
          <TrayGap $w={8} />
          27°C
          <TrayGap $w={8} />
          Haze
          <TrayGap $w={25} />
          <ChevronUp size={16} />
          <TrayGap $w={8} />
          <BatteryCharging size={16} />
          <TrayGap $w={10} />
          <Wifi size={15} color="#999" />
          <TrayGap $w={6} />
          <Volume2 size={16} />
          <ClockText>10:24 PM<br />11/13/2024</ClockText>
          <TrayNotif>
            <NoteStack />
            <NotifCount>2</NotifCount>
          </TrayNotif>
        </Tray>
      </Taskbar>
    </Page>
  );
}

export default App;
